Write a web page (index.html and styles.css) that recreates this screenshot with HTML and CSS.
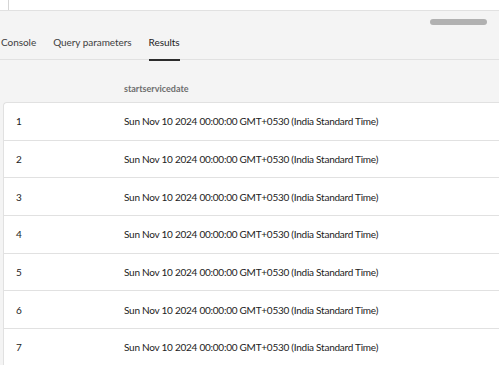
FILE: index.html
```html
<!DOCTYPE html>
<html lang="en">
<head>
  <meta charset="UTF-8" />
  <title>Query results</title>
  <link rel="stylesheet" href="styles.css">
</head>
<body>
  <div class="top">
    <div class="top-line"></div>
  </div>
  <div class="panel">
    <div class="toolbar">
      <div class="handle"></div>
    </div>
    <div class="tabs">
      <div class="tab">Console</div>
      <div class="tab">Query parameters</div>
      <div class="tab active">Results</div>
    </div>
    <div class="table-head">
      <div class="col-index"></div>
      <div class="col-date">startservicedate</div>
    </div>
    <div class="table-body">
      <div class="row"><div class="col-index">1</div><div class="col-date">Sun Nov 10 2024 00:00:00 GMT+0530 (India Standard Time)</div></div>
      <div class="row"><div class="col-index">2</div><div class="col-date">Sun Nov 10 2024 00:00:00 GMT+0530 (India Standard Time)</div></div>
      <div class="row"><div class="col-index">3</div><div class="col-date">Sun Nov 10 2024 00:00:00 GMT+0530 (India Standard Time)</div></div>
      <div class="row"><div class="col-index">4</div><div class="col-date">Sun Nov 10 2024 00:00:00 GMT+0530 (India Standard Time)</div></div>
      <div class="row"><div class="col-index">5</div><div class="col-date">Sun Nov 10 2024 00:00:00 GMT+0530 (India Standard Time)</div></div>
      <div class="row"><div class="col-index">6</div><div class="col-date">Sun Nov 10 2024 00:00:00 GMT+0530 (India Standard Time)</div></div>
      <div class="row"><div class="col-index">7</div><div class="col-date">Sun Nov 10 2024 00:00:00 GMT+0530 (India Standard Time)</div></div>
    </div>
  </div>
</body>
</html>
```

FILE: styles.css
```css
body {
  margin: 0;
  font-family: Lato, 'Open Sans', sans-serif;
  background: #f4f4f4;
  color: #2c2c2c;
  overflow: hidden;
}
.top {
  height: 10px;
  background: #fff;
  border-bottom: 1px solid #e1e1e1;
}
.top-line {
  margin-left: 8px;
  width: 1px;
  height: 10px;
  background: #d5d5d5;
}
.panel {
  background: #f4f4f4;
}
.toolbar {
  display: flex;
  justify-content: flex-end;
  padding: 8px 12px 0 0;
  height: 14px;
}
.handle {
  width: 57px;
  height: 6px;
  border-radius: 3px;
  background: #b1b1b1;
}
.tabs {
  display: flex;
  gap: 17px;
  padding-left: 1px;
  border-bottom: 1px solid #e1e1e1;
  height: 26px;
}
.tab {
  font-size: 10px;
  letter-spacing: -0.05px;
  color: #3e3e3e;
  line-height: 14px;
  padding-top: 2px;
  height: 24px;
  border-bottom: 2px solid transparent;
  margin-bottom: -2px;
}
.tab.active {
  color: #222;
  border-bottom-color: #2c2c2c;
}
.table-head {
  display: flex;
  height: 42px;
  padding: 24px 0 0 3px;
  box-sizing: border-box;
  font-size: 9px;
  font-weight: bold;
  line-height: 10px;
  color: #6e6e6e;
}
.col-index {
  width: 121px;
  padding-left: 12px;
  box-sizing: border-box;
}
.col-date {
  flex: 1;
}
.table-body {
  margin-left: 3px;
  background: #fff;
  border-top: 1px solid #e1e1e1;
  border-left: 1px solid #e1e1e1;
  border-top-left-radius: 4px;
}
.row {
  display: flex;
  align-items: center;
  height: 36.7px;
  border-bottom: 1px solid #e1e1e1;
  font-size: 10px;
  letter-spacing: -0.25px;
  color: #222;
}
.row .col-index {
  width: 120px;
}
```
